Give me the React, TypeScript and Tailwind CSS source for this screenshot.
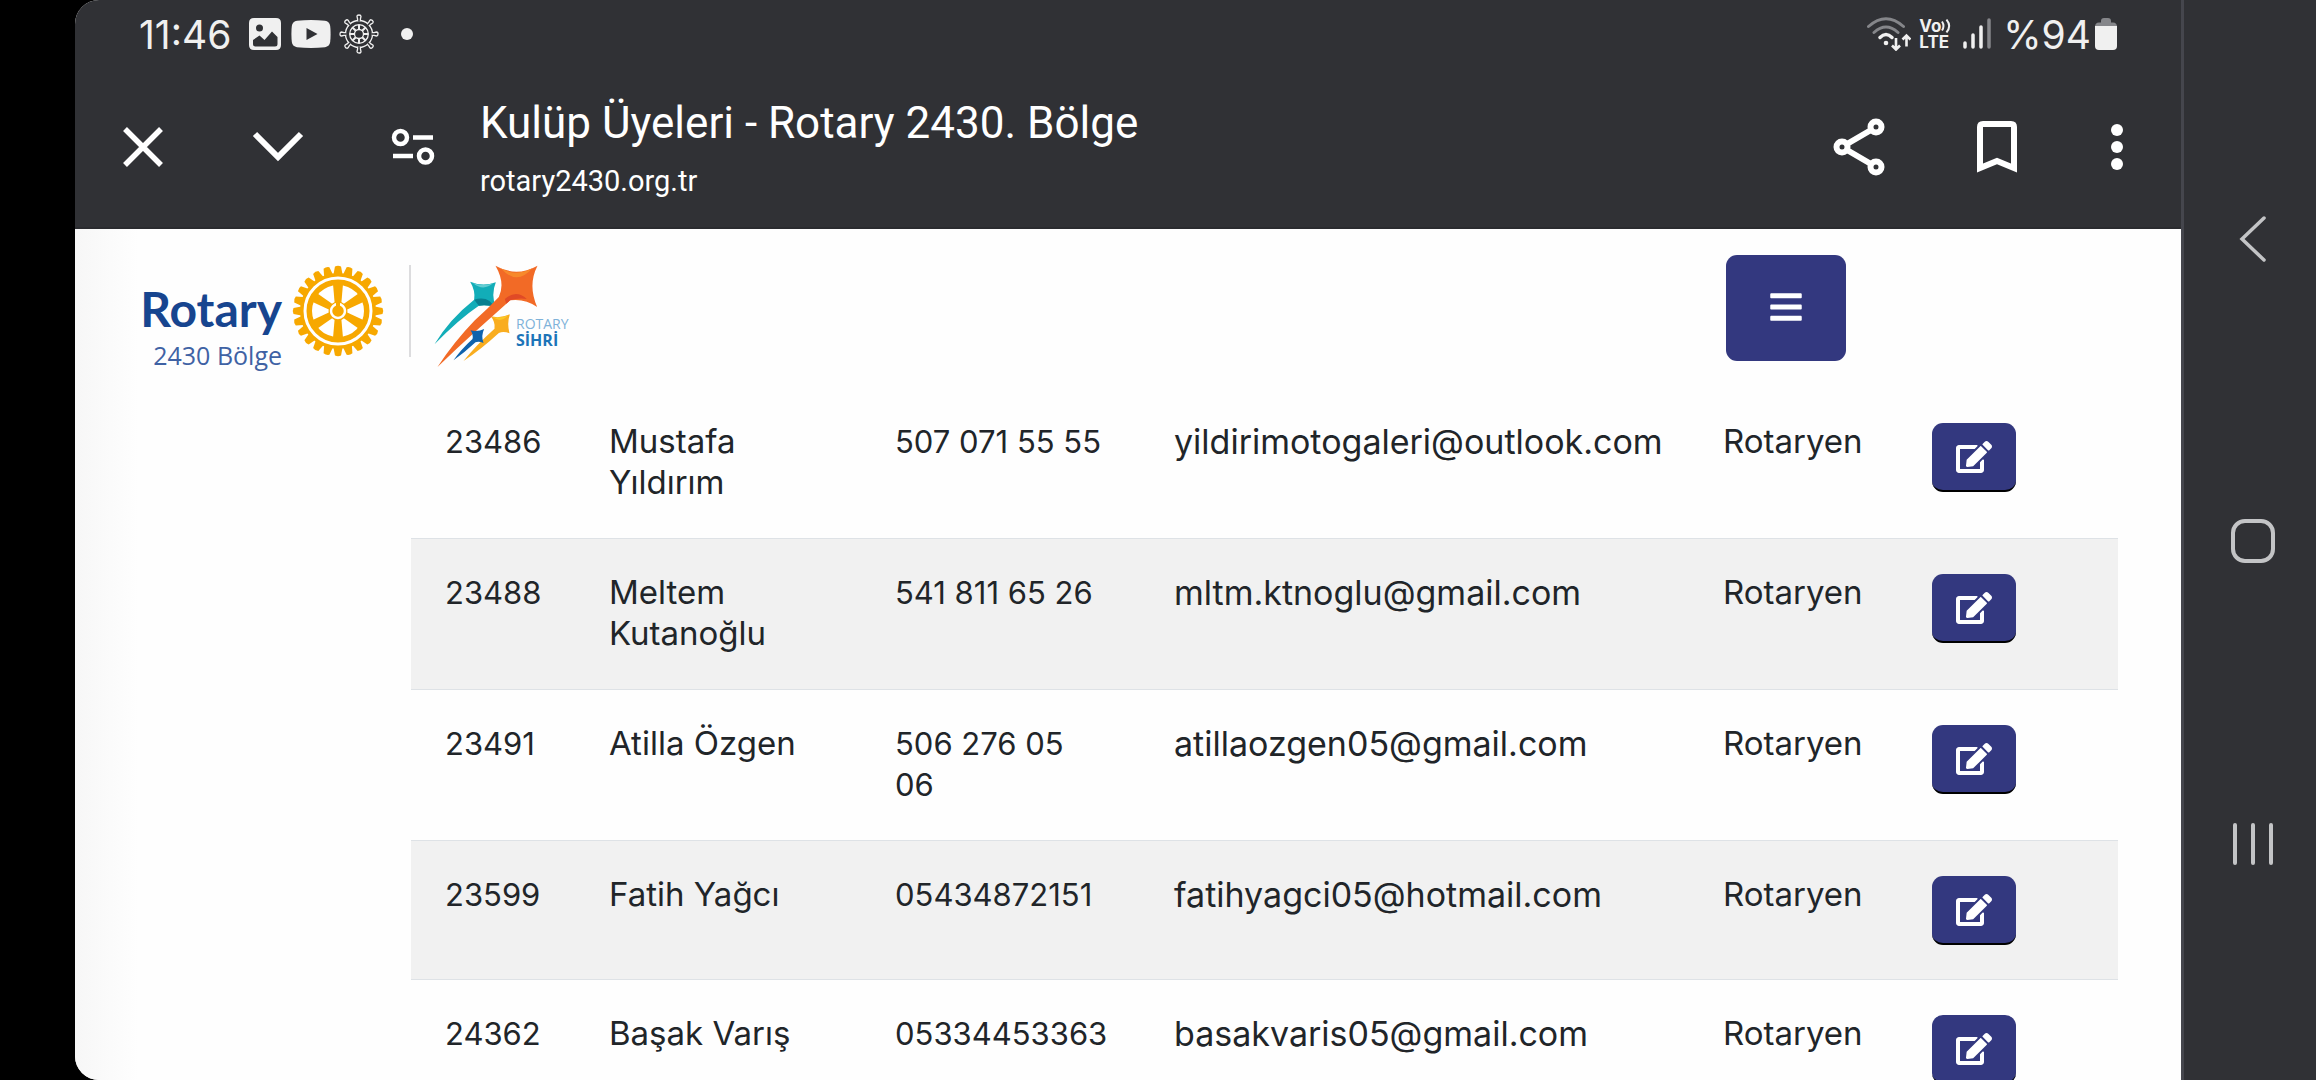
import { FaBars, FaEdit } from 'react-icons/fa';

interface Member {
  id: string;
  name: string;
  phone: string;
  email: string;
  role: string;
}

const members: Member[] = [
  { id: '23486', name: 'Mustafa Yıldırım', phone: '507 071 55 55', email: 'yildirimotogaleri@outlook.com', role: 'Rotaryen' },
  { id: '23488', name: 'Meltem Kutanoğlu', phone: '541 811 65 26', email: 'mltm.ktnoglu@gmail.com', role: 'Rotaryen' },
  { id: '23491', name: 'Atilla Özgen', phone: '506 276 05 06', email: 'atillaozgen05@gmail.com', role: 'Rotaryen' },
  { id: '23599', name: 'Fatih Yağcı', phone: '05434872151', email: 'fatihyagci05@hotmail.com', role: 'Rotaryen' },
  { id: '24362', name: 'Başak Varış', phone: '05334453363', email: 'basakvaris05@gmail.com', role: 'Rotaryen' },
];

const eight = [0, 45, 90, 135, 180, 225, 270, 315];
const six = [0, 60, 120, 180, 240, 300];
const teeth = Array.from({ length: 24 }, (_, i) => i * 15);

function HelmIcon() {
  return (
    <svg viewBox="0 0 40 40" className="size-10" fill="none" stroke="#f0f0f0" strokeWidth="1.3">
      <circle cx="20" cy="20" r="13.500" />
      <circle cx="20" cy="20" r="9.300" />
      <circle cx="20" cy="20" r="4.500" />
      {eight.map((angle) => (
        <g key={angle} transform={`rotate(${angle} 20 20)`}>
          <path d="M18.600 7.200V5L18 2.500Q18 1 20 1T22 2.500L21.400 5V7.200" fill="#303135" />
          <path d="M20 15.500V10.700" strokeWidth="2" />
        </g>
      ))}
    </svg>
  );
}

function StatusBar() {
  return (
    <div className="flex h-[68px] items-center justify-between pr-16 pl-16 text-[#f0f0f0]">
      <div className="flex items-center">
        <span className="w-[110px] text-[39px] leading-none">11:46</span>
        <svg viewBox="0 0 32 32" className="mr-2.5 size-8">
          <path
            fillRule="evenodd"
            fill="#f0f0f0"
            d="M5 0H27Q32 0 32 5V27Q32 32 27 32H5Q0 32 0 27V5Q0 0 5 0ZM10.500 6.500A3.500 3.500 0 1 0 10.500 13.500A3.500 3.500 0 0 0 10.500 6.500ZM4 22V26Q4 28.500 6.500 28.500H26Q28.500 28.500 28.500 26V19L23 13.500L15.500 22L10.500 17.500Z"
          />
        </svg>
        <svg viewBox="0 0 40 28" className="mr-2 h-7 w-10">
          <path fill="#f0f0f0" d="M6 .8Q20-.8 34 .8Q38.500 1.500 39.200 6Q40 14 39.200 22Q38.500 26.500 34 27.200Q20 28.800 6 27.200Q1.500 26.500 .8 22Q0 14 .8 6Q1.500 1.500 6 .8Z" />
          <path fill="#303135" d="M15.500 8V20L26.500 14Z" />
        </svg>
        <HelmIcon />
        <span className="ml-[22px] size-3 rounded-full bg-[#f0f0f0]" />
      </div>
      <div className="flex items-center">
        <svg viewBox="0 0 44 34" className="mr-2 h-[34px] w-11" fill="none" strokeLinecap="round">
          <path d="M1.500 9.500Q19-6 36.500 9.500M7 15.500Q19 4.500 31 15.500" stroke="#85868a" strokeWidth="3" />
          <path d="M13 20.500Q19 14.500 25 20.500" stroke="#f0f0f0" strokeWidth="3.500" />
          <circle cx="19" cy="26" r="2.300" fill="#f0f0f0" />
          <path d="M29 21V32M25 28.500L29 32.500L33 28.500M39.500 29.500V19M35.500 22.500L39.500 18.500L43.500 22.500" stroke="#f0f0f0" strokeWidth="2.600" strokeLinecap="butt" />
        </svg>
        <span className="mr-3 flex w-8 flex-col text-[17px] leading-4 font-bold">
          <span className="flex items-center">
            Vo
            <svg viewBox="0 0 10 14" className="h-3.5 w-2.5" fill="none" stroke="#f0f0f0" strokeWidth="2">
              <path d="M1 2.500Q4 7 1 11.500M5.500 .5Q11 7 5.500 13.500" />
            </svg>
          </span>
          <span>LTE</span>
        </span>
        <svg viewBox="0 0 28 32" className="mr-3 h-8 w-7" strokeLinecap="round" strokeWidth="3.500" stroke="#f0f0f0">
          <path d="M2 25V29M10 17V29M18 9V29" />
          <path d="M26 2V29" stroke="#85868a" />
        </svg>
        <span className="mr-1 text-[39px] leading-none">%94</span>
        <svg viewBox="0 0 22 32" className="h-8 w-[22px]">
          <path fill="#85868a" d="M6 3Q6 0 9 0H13Q16 0 16 3V4.500H18Q22 4.500 22 9H0Q0 4.500 4 4.500H6Z" />
          <path fill="#f0f0f0" d="M0 8H22V28Q22 32 18 32H4Q0 32 0 28Z" />
        </svg>
      </div>
    </div>
  );
}

function BrowserBar() {
  return (
    <div className="flex flex-1 items-start justify-between border-b-2 border-[#2a2b2f] pr-14 pl-[46px] text-white">
      <div className="flex">
        <button aria-label="Kapat" className="mt-[57px] mr-[87px] size-11">
          <svg viewBox="0 0 44 44" stroke="#fff" strokeWidth="5.500">
            <path d="M4 4L40 40M40 4L4 40" />
          </svg>
        </button>
        <button aria-label="Küçült" className="mt-[57px] mr-[87px] h-11 w-[52px]">
          <svg viewBox="0 0 52 44" fill="none" stroke="#fff" strokeWidth="6">
            <path d="M3 9L26 32L49 9" />
          </svg>
        </button>
        <button aria-label="Site bilgileri" className="mt-[57px] mr-[45px] size-11">
          <svg viewBox="0 0 44 44" fill="none" stroke="#fff" strokeWidth="4.500">
            <circle cx="9.500" cy="12.500" r="6.500" />
            <circle cx="34.500" cy="31" r="6.500" />
            <path d="M22 12.500H42M2 31H22" />
          </svg>
        </button>
        <div className="pt-[25px] font-[Roboto,sans-serif]">
          <h1 className="text-[44px] leading-[60px]">Kulüp Üyeleri - Rotary 2430. Bölge</h1>
          <p className="mt-2.5 text-[29px] leading-9">rotary2430.org.tr</p>
        </div>
      </div>
      <div className="flex gap-[92px] pt-[50px]">
        <button aria-label="Paylaş" className="h-[58px] w-[52px]">
          <svg viewBox="0 0 52 58" fill="none" stroke="#fff" strokeWidth="6">
            <circle cx="9" cy="29" r="5.500" />
            <circle cx="43" cy="9" r="5.500" />
            <circle cx="43" cy="49" r="5.500" />
            <path d="M14 26L38 12M14 32L38 46" />
          </svg>
        </button>
        <button aria-label="Yer işareti ekle" className="h-[58px] w-10">
          <svg viewBox="0 0 40 58" fill="none" stroke="#fff" strokeWidth="6">
            <path d="M3 50V9Q3 6 6 6H34Q37 6 37 9V50L20 43Z" />
          </svg>
        </button>
        <button aria-label="Diğer seçenekler" className="h-[58px] w-4">
          <svg viewBox="0 0 16 58" fill="#fff">
            <circle cx="8" cy="12" r="6" />
            <circle cx="8" cy="29" r="6" />
            <circle cx="8" cy="46" r="6" />
          </svg>
        </button>
      </div>
    </div>
  );
}

function RotaryWheel() {
  return (
    <svg viewBox="0 0 92 92" className="size-[92px]">
      {teeth.map((angle) => (
        <path key={angle} d="M41 12L43 1.500Q46 0 49 1.500L51 12Z" fill="#f7a800" transform={`rotate(${angle} 46 46)`} />
      ))}
      <circle cx="46" cy="46" r="38" fill="#f7a800" />
      <circle cx="46" cy="46" r="33" fill="none" stroke="#fff" strokeWidth="3" />
      <circle cx="46" cy="46" r="26" fill="#fff" />
      {six.map((angle) => (
        <path key={angle} d="M43 42L41 19H51L49 42Z" fill="#f7a800" transform={`rotate(${angle} 46 46)`} />
      ))}
      <circle cx="46" cy="46" r="9.500" fill="#f7a800" />
      <circle cx="46" cy="46" r="7" fill="none" stroke="#fff" strokeWidth="2.500" />
      <path d="M44 37H48V43H44Z" fill="#f7a800" />
    </svg>
  );
}

function StarsMark() {
  return (
    <svg viewBox="15 16 320 312" className="h-[104px] w-[107px]">
      {/* teal */}
      <path fill="#12adb8" d="M126 66Q163 82 203 68Q188 104 203 144Q180 134 152 138Q90 180 19 254Q62 180 138 120Q142 92 126 66Z" />
      <path fill="#63ccd2" d="M134 70Q163 82 195 71Q165 96 134 70Z" />
      <path fill="#087f90" d="M138 120Q166 112 184 124L203 144Q180 134 152 138Z" />
      {/* yellow */}
      <path fill="#f9ad1f" d="M188 170Q217 177 245 164Q236 192 244 221Q226 214 212 220Q160 268 106 304Q142 258 199 207Q202 188 188 170Z" />
      <path fill="#fbc926" d="M194 172Q217 177 240 167Q218 192 194 172Z" />
      {/* orange */}
      <path fill="#f26a26" d="M202 18Q264 54 328 18Q298 76 327 142Q290 116 246 122L150 208Q90 262 28 322Q78 246 140 182Q176 150 212 112Q232 70 202 18Z" />
      <path fill="#e04a26" d="M230 118Q264 88 296 118Q270 114 246 122L234 132Z" />
      <path fill="#f7892b" d="M218 26Q264 52 312 26Q266 80 218 26Z" />
      {/* blue */}
      <path fill="#0f62ac" d="M127 212Q148 218 168 208Q158 228 166 250Q152 244 142 248Q110 278 76 302Q98 270 133 238Q136 224 127 212Z" />
    </svg>
  );
}

function SiteHeader() {
  return (
    <header className="flex h-[159px] items-start justify-between pr-[335px] pl-[67px]">
      <a href="#" className="flex pt-9" aria-label="Rotary 2430 Bölge">
        <span className="flex w-[140px] flex-col items-end text-[#17458f]">
          <span className="mt-4 font-[Lato] text-[48px] leading-[56px] font-bold">Rotary</span>
          <span className="mt-0.5 font-['Open_Sans'] text-[25px] leading-8 font-medium text-[#3f62a4]">2430 Bölge</span>
        </span>
        <span className="ml-2.5">
          <RotaryWheel />
        </span>
        <span className="mr-[22px] ml-[25px] h-[92px] w-0.5 bg-[#dcdcde]" />
        <span className="flex">
          <StarsMark />
          <span className="-ml-6 flex flex-col pt-[50px] font-['Open_Sans'] leading-[17px]">
            <span className="text-[14px] text-[#7fb2d9]">ROTARY</span>
            <span className="text-[16px] font-bold text-[#1c74b8]">SİHRİ</span>
          </span>
        </span>
      </a>
      <button aria-label="Menü" className="mt-[26px] flex h-[106px] w-[120px] items-center justify-center rounded-[11px] bg-[#33387f] pb-0.5 text-white">
        <FaBars className="size-9" />
      </button>
    </header>
  );
}

function MemberTable() {
  return (
    <div className="flex-1 pr-[63px] pl-84">
      <table className="w-full table-fixed text-left text-[33px] leading-[41px] text-[#212529]">
        <colgroup>
          <col className="w-[164px]" />
          <col className="w-[286px]" />
          <col className="w-[279px]" />
          <col />
          <col className="w-[209px]" />
          <col className="w-[220px]" />
        </colgroup>
        <tbody>
          {members.map((member) => (
            <tr key={member.id} className="border-b border-[#dee2e6] align-top even:bg-[#f1f1f1]">
              <td className="pt-[33px] pb-[35px] pl-[34px] text-[31px] leading-[41px]">{member.id}</td>
              <td className="px-[34px] pt-[33px] pb-[35px]">{member.name}</td>
              <td className="px-[34px] pt-[33px] pb-[35px] text-[31px] leading-[41px]">{member.phone}</td>
              <td className="pt-[33px] pb-[35px] pl-[34px] text-[34px] leading-[41px]">{member.email}</td>
              <td className="pt-[33px] pb-[35px] pl-[34px]">{member.role}</td>
              <td className="px-[34px] pt-[35px] pb-[34px]">
                <button
                  aria-label={`${member.name} düzenle`}
                  className="flex h-[69px] w-[84px] items-center justify-center rounded-[11px] border-b-2 border-black bg-[#33387f] text-white"
                >
                  <FaEdit className="h-8 w-9" />
                </button>
              </td>
            </tr>
          ))}
        </tbody>
      </table>
    </div>
  );
}

function NavigationBar() {
  return (
    <nav className="flex w-[135px] shrink-0 flex-col border-l-[3px] border-[#45464d] bg-[#303135] pt-[88px] pb-[85px] pl-1.5">
      <button aria-label="Geri" className="flex flex-1 items-center justify-center">
        <svg viewBox="0 0 44 48" className="h-12 w-11" fill="none" stroke="#c3c4c6" strokeWidth="3.500" strokeLinecap="round">
          <path d="M33 3L11 24L33 45" />
        </svg>
      </button>
      <button aria-label="Ana ekran" className="flex flex-1 items-center justify-center">
        <span className="size-11 rounded-[14px] border-4 border-[#c3c4c6]" />
      </button>
      <button aria-label="Son uygulamalar" className="flex flex-1 items-center justify-center">
        <svg viewBox="0 0 44 44" className="size-11" stroke="#c3c4c6" strokeWidth="4" strokeLinecap="round">
          <path d="M4 3V41M22 3V41M40 3V41" />
        </svg>
      </button>
    </nav>
  );
}

export default function App() {
  return (
    <div className="flex h-screen overflow-hidden bg-black pl-[75px] font-[Inter,sans-serif]">
      <div className="flex flex-1 flex-col overflow-hidden rounded-l-3xl bg-[#fefefe]">
        <div className="flex h-[229px] shrink-0 flex-col bg-[#303135]">
          <StatusBar />
          <BrowserBar />
        </div>
        <main className="flex flex-1 flex-col bg-linear-to-r from-[#f7f7f7] to-[#fefefe] to-3%">
          <SiteHeader />
          <MemberTable />
        </main>
      </div>
      <NavigationBar />
    </div>
  );
}
